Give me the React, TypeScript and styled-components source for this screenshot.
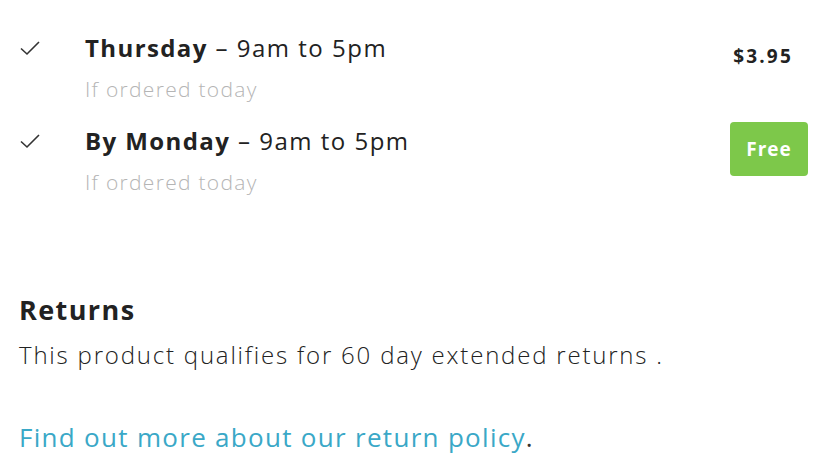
import React from "react";
import styled, { createGlobalStyle } from "styled-components";

const GlobalStyle = createGlobalStyle`
  body {
    margin: 0;
    background: #ffffff;
    font-family: "Open Sans", Lato, sans-serif;
    color: #222222;
  }
`;

const Page = styled.div`
  width: 830px;
  height: 474px;
  box-sizing: border-box;
  padding: 30px 22px 0 19px;
  overflow: hidden;
`;

const DeliveryList = styled.div`
  display: flex;
  flex-direction: column;
  gap: 19px;
`;

const Option = styled.div`
  display: grid;
  grid-template-columns: 66px 1fr auto;
  align-items: start;
`;

const Check = styled.svg`
  width: 22px;
  height: 16px;
  margin-top: 10px;
`;

const Info = styled.div`
  display: flex;
  flex-direction: column;
`;

const Title = styled.div`
  font-size: 24px;
  line-height: 36px;
  font-weight: 400;
  letter-spacing: 1.5px;
  color: #222222;

  b {
    font-weight: 700;
    letter-spacing: 1.4px;
  }
`;

const Note = styled.div`
  margin-top: 8px;
  font-size: 21px;
  line-height: 30px;
  font-weight: 300;
  letter-spacing: 1.3px;
  color: #b5b5b5;
`;

const Price = styled.div`
  font-size: 19px;
  font-weight: 700;
  letter-spacing: 2.2px;
  padding: 13px 15px 0 0;
`;

const FreeBadge = styled.div`
  background: #7dc84a;
  color: #ffffff;
  font-size: 19px;
  font-weight: 700;
  letter-spacing: 1px;
  width: 78px;
  height: 54px;
  border-radius: 4px;
  display: flex;
  align-items: center;
  justify-content: center;
  margin-top: -1px;
`;

const Returns = styled.section`
  margin-top: 95px;
`;

const Heading = styled.h2`
  margin: 0;
  font-size: 27px;
  line-height: 36px;
  font-weight: 700;
  letter-spacing: 1.4px;
  color: #222222;
`;

const Body = styled.p`
  margin: 11px 0 0;
  font-size: 24px;
  line-height: 32px;
  font-weight: 300;
  letter-spacing: 1.8px;
  color: #222222;
`;

const PolicyLine = styled.p`
  margin: 48px 0 0;
  font-size: 26px;
  line-height: 36px;
  font-weight: 400;
  letter-spacing: 1.3px;
  color: #333333;
`;

const Link = styled.a`
  color: #3aa8c7;
  text-decoration: none;
`;

function CheckIcon() {
  return (
    <Check viewBox="0 0 22 16" fill="none">
      <path d="M2 8.5 L8 14 L20 2" stroke="#333" strokeWidth="1.6" />
    </Check>
  );
}

const options = [
  { day: "Thursday", price: "$3.95", free: false },
  { day: "By Monday", price: "Free", free: true },
];

export default function App() {
  return (
    <>
      <GlobalStyle />
      <Page>
        <DeliveryList>
          {options.map((o) => (
            <Option key={o.day}>
              <CheckIcon />
              <Info>
                <Title>
                  <b>{o.day}</b> – 9am to 5pm
                </Title>
                <Note>If ordered today</Note>
              </Info>
              {o.free ? <FreeBadge>{o.price}</FreeBadge> : <Price>{o.price}</Price>}
            </Option>
          ))}
        </DeliveryList>
        <Returns>
          <Heading>Returns</Heading>
          <Body>This product qualifies for 60 day extended returns .</Body>
          <PolicyLine>
            <Link href="#">Find out more about our return policy</Link>.
          </PolicyLine>
        </Returns>
      </Page>
    </>
  );
}
